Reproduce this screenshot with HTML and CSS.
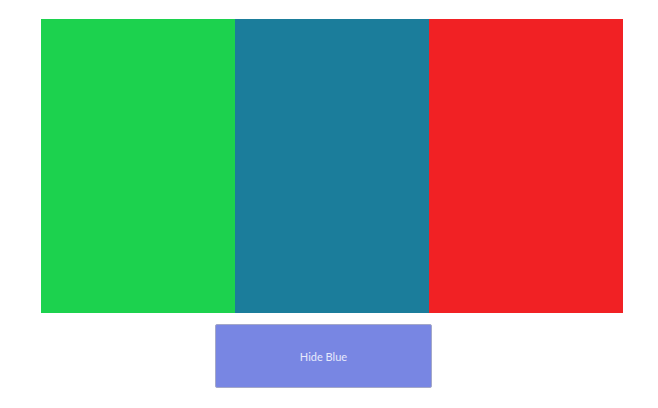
FILE: index.html
```
<!DOCTYPE html>
<html>
<head>
<meta charset="utf-8">
<link rel="stylesheet" href="styles.css">
</head>
<body>
<div class="page">
  <div class="columns">
    <div class="col green"></div>
    <div class="col blue"></div>
    <div class="col red"></div>
  </div>
  <button class="toggle">Hide Blue</button>
</div>
</body>
</html>
```
FILE: styles.css
```
html, body {
  margin: 0;
  padding: 0;
  background: #ffffff;
}
.page {
  padding: 19px 0 0 41px;
  display: flex;
  flex-direction: column;
  align-items: flex-start;
}
.columns {
  display: flex;
  width: 582px;
  height: 294px;
}
.col {
  flex: 1;
}
.green { background: #1cd24e; }
.blue { background: #1b7d9b; }
.red { background: #f12124; }
.toggle {
  margin: 11px 0 0 174px;
  width: 217px;
  height: 64px;
  box-sizing: border-box;
  background: #7886e3;
  border: 1px solid #a4a8c8;
  border-radius: 2px;
  color: #e6e9fc;
  font-family: Lato, "Liberation Sans", sans-serif;
  font-size: 11px;
  padding: 0;
}
```
